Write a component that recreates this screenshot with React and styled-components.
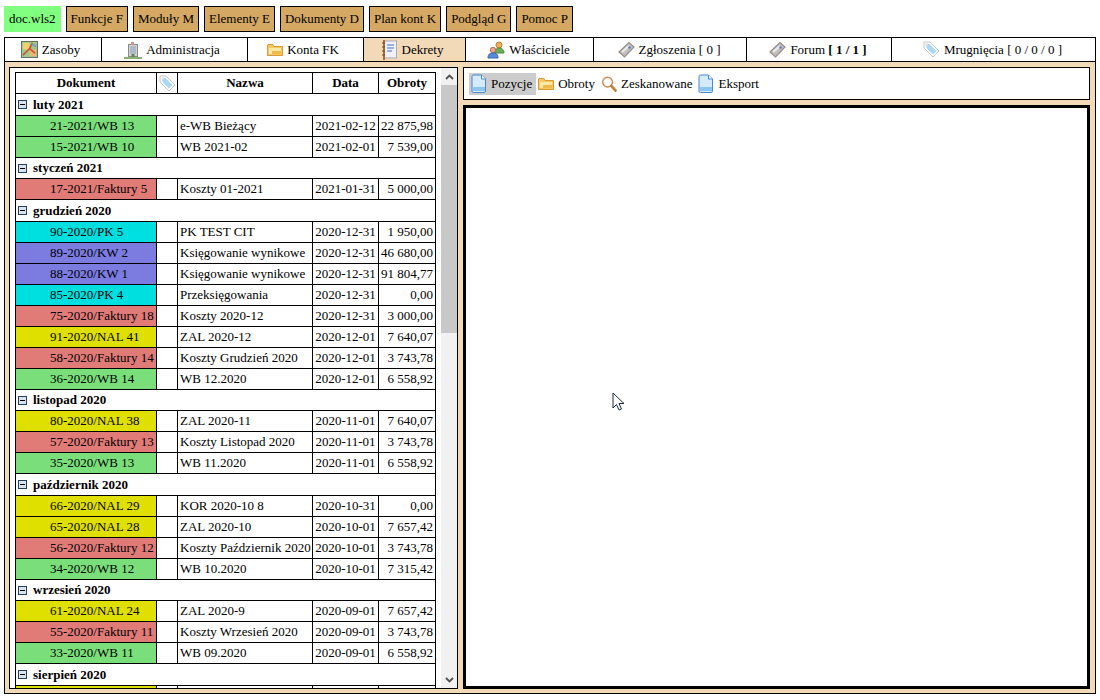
import React from "react";
import styled, { createGlobalStyle } from "styled-components";

const Global = createGlobalStyle`
  html, body {
    margin: 0;
    padding: 0;
    background: #fff;
    overflow: hidden;
  }
  body {
    font-family: "Liberation Serif", "Times New Roman", serif;
    font-size: 13px;
    color: #000;
  }
`;

const Page = styled.div`
  width: 1100px;
  height: 700px;
  padding: 6px 4px 0 4px;
  box-sizing: border-box;
  display: flex;
  flex-direction: column;
`;

const Menu = styled.div`
  display: flex;
  align-items: center;
  height: 26px;
  margin-bottom: 5px;
`;
const Session = styled.div`
  background: #80ff80;
  height: 26px;
  line-height: 26px;
  padding: 0 5px;
  margin-right: 5px;
`;
const MenuButton = styled.div`
  background: #d5a964;
  border: 1px solid #000;
  height: 24px;
  line-height: 24px;
  padding: 0 4px;
  margin-right: 5px;
`;

const Frame = styled.div`
  border: 1px solid #000;
  width: 1092px;
  height: 657px;
  box-sizing: border-box;
  display: flex;
  flex-direction: column;
  background: #f2d9b8;
`;
const Tabs = styled.div`
  display: flex;
  height: 23px;
  background: #fff;
  border-bottom: 1px solid #000;
  flex: none;
`;
const Tab = styled.div`
  width: ${p => p.$w}px;
  box-sizing: border-box;
  border-right: ${p => (p.$last ? "none" : "1px solid #000")};
  background: ${p => (p.$active ? "#f2d9b8" : "#fff")};
  display: flex;
  align-items: center;
  justify-content: center;
  gap: 4px;
  padding-right: ${p => p.$pad || 2}px;
  white-space: pre;
`;

const Body = styled.div`
  flex: 1;
  display: flex;
  gap: 5px;
  padding: 5px 5px 4px 4px;
  min-height: 0;
`;
const LeftPanel = styled.div`
  width: 449px;
  flex: none;
  border: 1px solid #000;
  background: #fff;
  box-sizing: border-box;
  display: flex;
  padding-left: 5px;
  gap: 5px;
  min-height: 0;
`;
const ListClip = styled.div`
  width: 421px;
  margin-top: 4px;
  overflow: hidden;
  flex: none;
`;
const Table = styled.table`
  border-collapse: collapse;
  table-layout: fixed;
  width: 420px;
  th, td {
    border: 1px solid #000;
    padding: 0 2px;
    height: 20px;
    white-space: nowrap;
    overflow: hidden;
  }
  th {
    font-weight: bold;
    text-align: center;
  }
`;
const TagHead = styled.th`
  && {
    padding: 0;
  }
  svg {
    display: block;
    margin: 0 auto;
  }
`;
const GroupCell = styled.td`
  && {
    font-weight: bold;
    padding-left: 2px;
    height: ${p => (p.$tall ? 21 : 20)}px;
  }
`;
const GroupLabel = styled.span`
  display: flex;
  align-items: center;
  gap: 6px;
`;
const DocCell = styled.td`
  && {
    background: ${p => p.$color};
    text-align: left;
    padding-left: 34px;
  }
`;
const AmountCell = styled.td`
  && {
    text-align: right;
    padding-right: 2px;
  }
`;
const DateCell = styled.td`
  && {
    text-align: center;
    padding: 0;
  }
`;

const Scrollbar = styled.div`
  width: 16px;
  flex: none;
  background: #f1f1f1;
  display: flex;
  flex-direction: column;
`;
const ScrollArrow = styled.div`
  height: 17px;
  flex: none;
  display: flex;
  align-items: center;
  justify-content: center;
`;
const ScrollThumb = styled.div`
  height: 248px;
  flex: none;
  background: #c8c8c8;
`;
const ScrollRest = styled.div`
  flex: 1;
`;

const RightPanel = styled.div`
  flex: 1;
  display: flex;
  flex-direction: column;
  gap: 5px;
  min-width: 0;
`;
const Toolbar = styled.div`
  height: 33px;
  flex: none;
  box-sizing: border-box;
  border: 1px solid #000;
  background: #fff;
  display: flex;
  align-items: center;
  padding: 0 4px 0 5px;
`;
const ToolItem = styled.div`
  display: flex;
  align-items: center;
  gap: 4px;
  height: 22px;
  padding: 0 4px 0 2px;
  background: ${p => (p.$active ? "#cccccc" : "transparent")};
`;
const Canvas = styled.div`
  flex: 1;
  border: 3px solid #000;
  background: #fff;
  position: relative;
`;
const Cursor = styled.svg`
  position: absolute;
  left: 146px;
  top: 284px;
`;

const DocIcon = () => (
  <svg width="16" height="19" viewBox="0 0 16 19">
    <path d="M2.500 1h8l4 4v12a1.500 1.500 0 0 1-1.500 1.500H2.500A1.500 1.500 0 0 1 1 17V2.500A1.500 1.500 0 0 1 2.500 1z" fill="#d3ebfb" stroke="#4a86d0" />
    <path d="M10.500 1v4h4" fill="#f0f8ff" stroke="#4a86d0" />
    <rect x="2" y="13" width="12" height="4" fill="#8cc4f2" />
  </svg>
);
const FolderIcon = () => (
  <svg width="16" height="14" viewBox="0 0 16 14">
    <path d="M.5 2V12.500h15V3.500H7L6 1.500H1z" fill="#f5c860" stroke="#d99a35" />
    <rect x="2" y="5" width="12" height="6" fill="#fbe7a8" />
    <rect x="5" y="8" width="9" height="3" fill="#f0b848" />
  </svg>
);
const MapIcon = () => (
  <svg width="17" height="17" viewBox="0 0 18 18">
    <rect x=".5" y=".5" width="17" height="17" fill="#9bc98a" stroke="#666" />
    <rect x="2" y="2" width="7" height="7" fill="#f0d070" />
    <rect x="9" y="9" width="7" height="7" fill="#e8b878" />
    <path d="M2 15 9 8l3-6M9 8l6 5" stroke="#d8482c" strokeWidth="1.600" fill="none" />
    <path d="M11 3l5 3" stroke="#6a9ad8" strokeWidth="1.500" />
  </svg>
);
const BuildingIcon = () => (
  <svg width="18" height="18" viewBox="0 0 18 18">
    <path d="M0 17h18" stroke="#8cb070" strokeWidth="2" />
    <rect x="4.500" y="3.500" width="9" height="12" fill="#d4d4d4" stroke="#8a8a8a" />
    <rect x="7" y="1" width="3" height="3" fill="#c89880" />
    <path d="M6 6h6M6 8h6M6 10h6M6 12h6" stroke="#88a0b8" />
    <rect x="7.500" y="13" width="3" height="3" fill="#6a8060" />
  </svg>
);
const LedgerIcon = () => (
  <svg width="17" height="20" viewBox="0 0 17 20">
    <rect x="2.500" y="1" width="13" height="17" fill="#f0f0f8" stroke="#aab" />
    <path d="M3 0v20" stroke="#b06a3a" strokeWidth="2" />
    <path d="M1 3h3M1 7h3M1 11h3M1 15h3" stroke="#6a4a2a" />
    <path d="M6 5h7M6 8h7M6 11h5" stroke="#7a9ad8" strokeWidth="1.400" />
  </svg>
);
const UsersIcon = () => (
  <svg width="18" height="18" viewBox="0 0 18 18">
    <circle cx="12" cy="4" r="3" fill="#eeb060" stroke="#c08030" />
    <path d="M8 12c0-4 2-5 4-5s5 1 5 5z" fill="#68b058" stroke="#4a8a3a" />
    <circle cx="6" cy="9" r="2.700" fill="#e8a890" stroke="#b87050" />
    <path d="M1 17c0-4 2-5 5-5s5 1 5 5z" fill="#5888d8" stroke="#3a68b0" />
  </svg>
);
const TicketIcon = () => (
  <svg width="17" height="17" viewBox="0 0 17 17">
    <path d="M1 11 11 1.500l5 4.500L6.500 16z" fill="#c0c0c0" stroke="#9a8a88" strokeWidth="1.200" />
    <path d="M4 11 11 5" stroke="#eee" strokeWidth="2" />
    <circle cx="11.500" cy="6.500" r="1.200" fill="#5878c8" />
  </svg>
);
const TagIcon = () => (
  <svg width="17" height="17" viewBox="0 0 17 17">
    <path d="M1 1h6l9 9-6 6-9-9z" fill="#fff" stroke="#c4c4c4" />
    <path d="M3.500 4.500 5 3h1.500l7 7-3.500 3.500-6.500-6.500z" fill="#a8d8f8" />
    <circle cx="4" cy="4" r="1.100" fill="#fff" stroke="#bbb" strokeWidth=".6" />
  </svg>
);
const SearchIcon = () => (
  <svg width="16" height="18" viewBox="0 0 17 18">
    <circle cx="7" cy="7" r="5.200" fill="#fff" stroke="#d08a50" strokeWidth="1.500" />
    <path d="M11 11l4.500 5" stroke="#c87a38" strokeWidth="2.800" strokeLinecap="round" />
  </svg>
);
const MinusBox = () => (
  <svg width="9" height="9" viewBox="0 0 9 9">
    <rect x=".5" y=".5" width="8" height="8" fill="#d8e4f0" stroke="#23415c" />
    <path d="M2 4.500h5" stroke="#000" />
  </svg>
);
const Chevron = ({ up }) => (
  <svg width="9" height="6" viewBox="0 0 9 6">
    <path d={up ? "M1 5l3.500-3.500L8 5" : "M1 1l3.500 3.500L8 1"} fill="none" stroke="#505050" strokeWidth="1.800" />
  </svg>
);

const GREEN = "#7adf7a";
const RED = "#e07b78";
const CYAN = "#00dfdf";
const BLUE = "#7b7be0";
const YELLOW = "#dfdf00";

const groups = [
  ["luty 2021", true, [
    ["21-2021/WB 13", GREEN, "e-WB Bieżący", "2021-02-12", "22 875,98"],
    ["15-2021/WB 10", GREEN, "WB 2021-02", "2021-02-01", "7 539,00"],
  ]],
  ["styczeń 2021", false, [
    ["17-2021/Faktury 5", RED, "Koszty 01-2021", "2021-01-31", "5 000,00"],
  ]],
  ["grudzień 2020", true, [
    ["90-2020/PK 5", CYAN, "PK TEST CIT", "2020-12-31", "1 950,00"],
    ["89-2020/KW 2", BLUE, "Księgowanie wynikowe", "2020-12-31", "46 680,00"],
    ["88-2020/KW 1", BLUE, "Księgowanie wynikowe", "2020-12-31", "91 804,77"],
    ["85-2020/PK 4", CYAN, "Przeksięgowania", "2020-12-31", "0,00"],
    ["75-2020/Faktury 18", RED, "Koszty 2020-12", "2020-12-31", "3 000,00"],
    ["91-2020/NAL 41", YELLOW, "ZAL 2020-12", "2020-12-01", "7 640,07"],
    ["58-2020/Faktury 14", RED, "Koszty Grudzień 2020", "2020-12-01", "3 743,78"],
    ["36-2020/WB 14", GREEN, "WB 12.2020", "2020-12-01", "6 558,92"],
  ]],
  ["listopad 2020", false, [
    ["80-2020/NAL 38", YELLOW, "ZAL 2020-11", "2020-11-01", "7 640,07"],
    ["57-2020/Faktury 13", RED, "Koszty Listopad 2020", "2020-11-01", "3 743,78"],
    ["35-2020/WB 13", GREEN, "WB 11.2020", "2020-11-01", "6 558,92"],
  ]],
  ["październik 2020", true, [
    ["66-2020/NAL 29", YELLOW, "KOR 2020-10 8", "2020-10-31", "0,00"],
    ["65-2020/NAL 28", YELLOW, "ZAL 2020-10", "2020-10-01", "7 657,42"],
    ["56-2020/Faktury 12", RED, "Koszty Październik 2020", "2020-10-01", "3 743,78"],
    ["34-2020/WB 12", GREEN, "WB 10.2020", "2020-10-01", "7 315,42"],
  ]],
  ["wrzesień 2020", false, [
    ["61-2020/NAL 24", YELLOW, "ZAL 2020-9", "2020-09-01", "7 657,42"],
    ["55-2020/Faktury 11", RED, "Koszty Wrzesień 2020", "2020-09-01", "3 743,78"],
    ["33-2020/WB 11", GREEN, "WB 09.2020", "2020-09-01", "6 558,92"],
  ]],
  // last row is scrolled almost out of view, only its top strip shows
  ["sierpień 2020", true, [["", YELLOW, "", "", ""]]],
];

const menu = ["Funkcje F", "Moduły M", "Elementy E", "Dokumenty D", "Plan kont K", "Podgląd G", "Pomoc P"];

const tabs = [
  { w: 97, pad: 5, icon: <MapIcon />, label: "Zasoby" },
  { w: 146, pad: 5, icon: <BuildingIcon />, label: "Administracja" },
  { w: 116, pad: 5, icon: <FolderIcon />, label: "Konta FK" },
  { w: 102, pad: 5, icon: <LedgerIcon />, label: "Dekrety", active: true },
  { w: 128, icon: <UsersIcon />, label: "Właściciele" },
  { w: 153, icon: <TicketIcon />, label: "Zgłoszenia [ 0 ]" },
  { w: 145, icon: <TicketIcon />, label: <>Forum <b>[ 1 / 1 ]</b></> },
  { w: 203, icon: <TagIcon />, label: "Mrugnięcia [ 0 / 0 / 0 ]", last: true },
];

const App = () => (
  <>
    <Global />
    <Page>
      <Menu>
        <Session>doc.wls2</Session>
        {menu.map(m => (
          <MenuButton key={m}>{m}</MenuButton>
        ))}
      </Menu>
      <Frame>
        <Tabs>
          {tabs.map((t, i) => (
            <Tab key={i} $w={t.w} $pad={t.pad} $active={t.active} $last={t.last}>
              {t.icon}
              <span>{t.label}</span>
            </Tab>
          ))}
        </Tabs>
        <Body>
          <LeftPanel>
            <ListClip>
              <Table>
                <colgroup>
                  <col style={{ width: 141 }} />
                  <col style={{ width: 21 }} />
                  <col style={{ width: 135 }} />
                  <col style={{ width: 66 }} />
                  <col style={{ width: 57 }} />
                </colgroup>
                <thead>
                  <tr>
                    <th>Dokument</th>
                    <TagHead>
                      <TagIcon />
                    </TagHead>
                    <th>Nazwa</th>
                    <th>Data</th>
                    <th>Obroty</th>
                  </tr>
                </thead>
                <tbody>
                  {groups.map(([name, tall, rows]) => (
                    <React.Fragment key={name}>
                      <tr>
                        <GroupCell colSpan={5} $tall={tall}>
                          <GroupLabel>
                            <MinusBox />
                            {name}
                          </GroupLabel>
                        </GroupCell>
                      </tr>
                      {rows.map((r, i) => (
                        <tr key={i}>
                          <DocCell $color={r[1]}>{r[0]}</DocCell>
                          <td />
                          <td>{r[2]}</td>
                          <DateCell>{r[3]}</DateCell>
                          <AmountCell>{r[4]}</AmountCell>
                        </tr>
                      ))}
                    </React.Fragment>
                  ))}
                </tbody>
              </Table>
            </ListClip>
            <Scrollbar>
              <ScrollArrow>
                <Chevron up />
              </ScrollArrow>
              <ScrollThumb />
              <ScrollRest />
              <ScrollArrow>
                <Chevron />
              </ScrollArrow>
            </Scrollbar>
          </LeftPanel>
          <RightPanel>
            <Toolbar>
              <ToolItem $active>
                <DocIcon />
                Pozycje
              </ToolItem>
              <ToolItem>
                <FolderIcon />
                Obroty
              </ToolItem>
              <ToolItem>
                <SearchIcon />
                Zeskanowane
              </ToolItem>
              <ToolItem>
                <DocIcon />
                Eksport
              </ToolItem>
            </Toolbar>
            <Canvas>
              <Cursor width="13" height="20" viewBox="0 0 13 20">
                <path d="M1 1v15l3.500-3.500L7 18l2.500-1L7 11.500h5z" fill="#fff" stroke="#1a2a40" />
              </Cursor>
            </Canvas>
          </RightPanel>
        </Body>
      </Frame>
    </Page>
  </>
);

export default App;
